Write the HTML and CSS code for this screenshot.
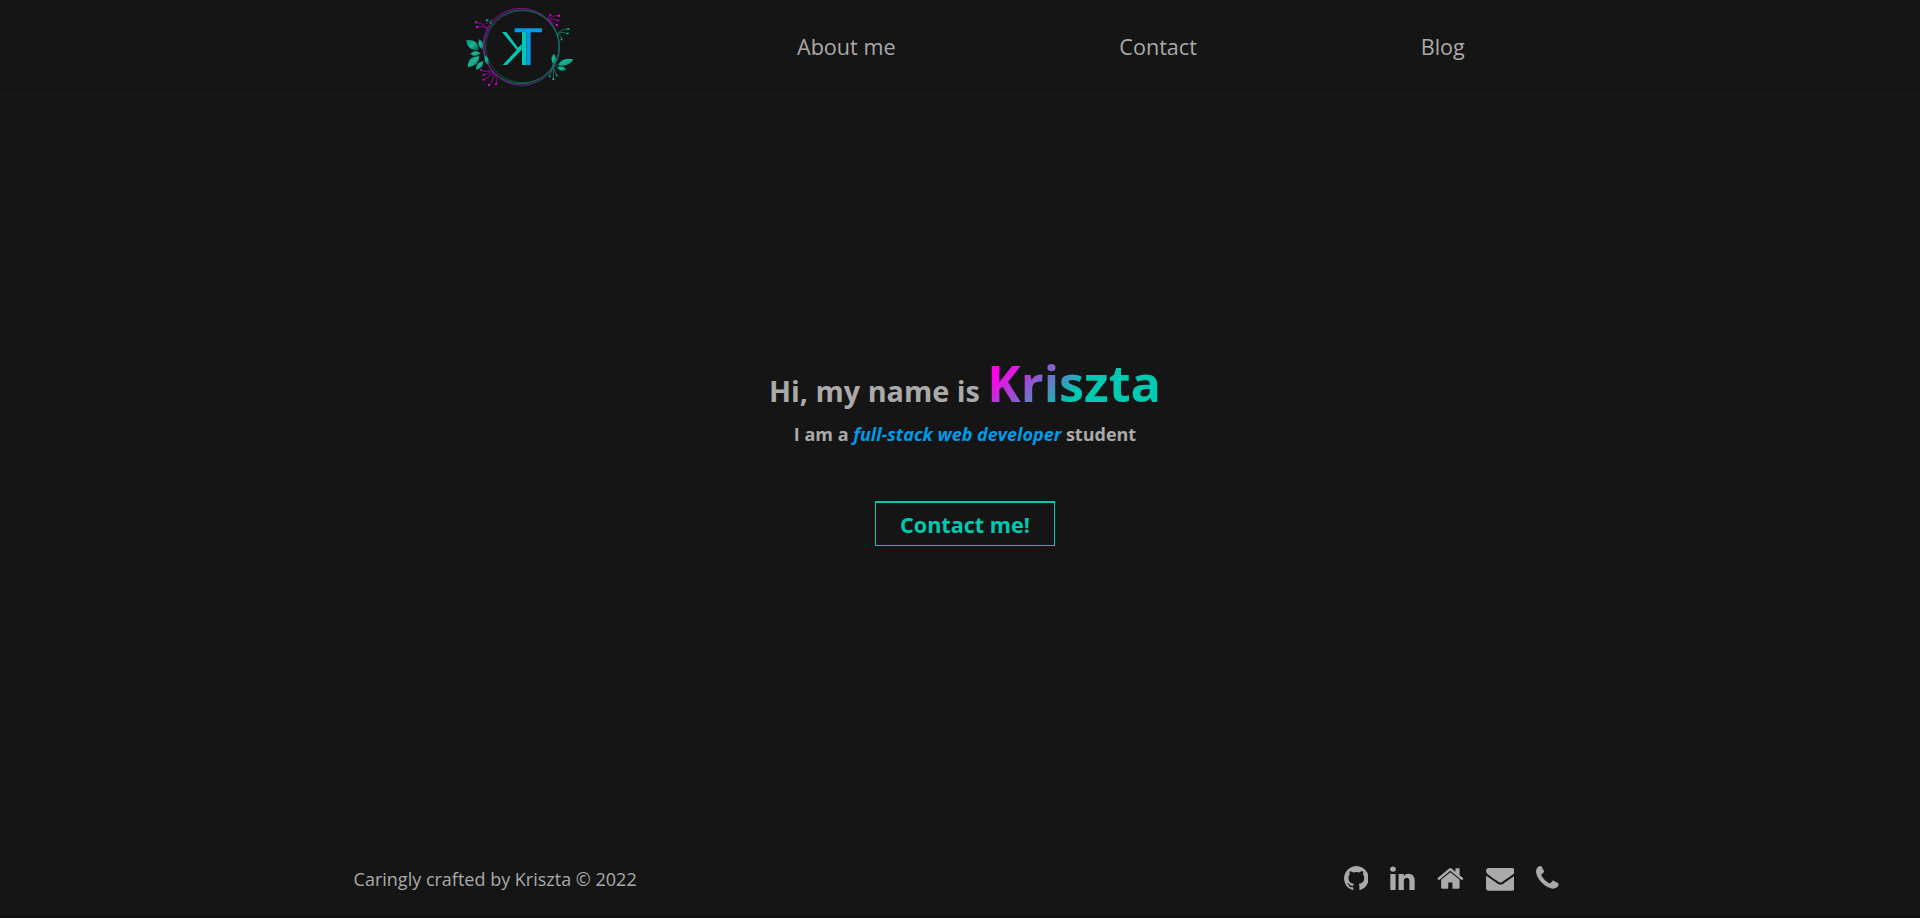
FILE: index.html
```html
<!DOCTYPE html>
<html lang="en">
<head>
<meta charset="utf-8">
<title>Kriszta</title>
<link rel="stylesheet" href="styles.css">
</head>
<body>
<header class="header">
  <nav class="nav">
    <a class="logo" href="#" aria-label="KT">
      <svg width="140" height="93" viewBox="0 0 420 279">
        <defs>
          <linearGradient id="ring" x1="0" y1="0" x2="1" y2="1"><stop offset="0" stop-color="#b100b1"/><stop offset=".45" stop-color="#7a2590"/><stop offset=".6" stop-color="#137a68"/><stop offset="1" stop-color="#128f78"/></linearGradient>
          <linearGradient id="ring2" x1="0" y1="1" x2="1" y2="0"><stop offset="0" stop-color="#b000b0"/><stop offset=".4" stop-color="#5a3a90"/><stop offset="1" stop-color="#117a66"/></linearGradient>
          <linearGradient id="leaf" x1="0" y1="0" x2="1" y2="1"><stop offset="0" stop-color="#0a8f76"/><stop offset=".5" stop-color="#1cb394"/><stop offset="1" stop-color="#075c4c"/></linearGradient>
        </defs>
        <g fill="none" stroke-width="2.6">
          <ellipse cx="213" cy="138" rx="114" ry="113" stroke="url(#ring)"/>
          <ellipse cx="215" cy="143" rx="113" ry="113" stroke="url(#ring2)"/>
          <ellipse cx="218" cy="140" rx="111" ry="108" stroke="#126b5c" stroke-width="2"/>
        </g>
        <g fill="none" stroke="#a800a8" stroke-width="2.5">
          <path d="M113 92Q107 70 78 67M111 84Q97 76 81 81M111 72L110 58"/>
          <path d="M296 65Q302 45 327 47M296 65Q307 54 324 62M296 65Q314 68 321 76M297 60Q293 51 301 44"/>
          <path d="M126 217Q122 230 101 239M128 218Q134 243 117 255M132 221Q145 236 138 251M124 214Q112 222 100 224M122 212Q103 219 94 209"/>
        </g>
        <g fill="#f000e0"><path d="M75 64h6v6h-6zM78 78h6v6h-6zM324 44h6v6h-6zM322 59h5v5h-5zM318 73h6v5h-6zM299 42h5v5h-5zM98 237h5v5h-5zM114 252h6v6h-6zM135 249h6v5h-6zM98 223h5v4h-5zM91 207h5v5h-5z"/></g>
        <g fill="none" stroke="#12806c" stroke-width="2.5"><path d="M320 105Q333 86 355 87M324 100Q338 93 353 101M321 104Q336 105 334 118M111 61Q122 65 128 74M126 58L119 72M306 203Q304 219 298 229M309 203Q312 221 310 237M310 202L320 226M307 202Q310 188 310 179M309 202Q322 193 335 186"/></g>
        <g fill="#12b796"><path d="M352 84h6v5h-6zM350 98h6v5h-6zM332 116h5v5h-5zM108 58h5v5h-5zM296 227h5v5h-5zM307 235h6v5h-6zM318 224h5v5h-5z"/></g>
        <g fill="url(#leaf)">
          <path d="M48 121Q84 114 86 150Q54 154 48 121z"/><path d="M87 118Q106 128 98 148Q79 140 87 118z"/>
          <path d="M61 162Q73 145 92 160Q78 175 61 162z"/><path d="M54 202Q52 168 88 169Q88 197 54 202z"/>
          <path d="M78 209Q78 185 100 184Q100 207 78 209z"/><path d="M104 165Q120 174 115 194Q100 188 104 165z"/>
          <path d="M311 161Q325 176 312 192Q297 179 311 161z"/><path d="M325 196Q334 170 370 178Q359 202 325 196z"/><path d="M320 202Q337 193 349 208Q334 220 320 202z"/>
        </g>
        <path d="M156 96h13L204 143L215 132V149L171 195H158L200 150z" fill="#00c9b1"/>
        <path d="M216 96h13v99h-13z" fill="#00c9b1"/><path d="M194 85h82v12h-82zM229 97h13v98h-13z" fill="#009be8"/><path d="M228 97h3v98h-3z" fill="#087da9"/>
      </svg>
    </a>
    <a class="link" href="#">About me</a>
    <a class="link" href="#">Contact</a>
    <a class="link" href="#">Blog</a>
  </nav>
</header>
<main class="hero">
  <h1 class="title">Hi, my name is <span class="name">Kriszta</span></h1>
  <h2 class="subtitle">I am a <em class="role">full-stack web developer</em> student</h2>
  <a class="button" href="#">Contact me!</a>
</main>
<footer class="footer">
  <p class="credit">Caringly crafted by Kriszta © 2022</p>
  <div class="social">
    <svg width="24.7" height="28.8" viewBox="128 0 1536 1792"><path d="M896 128q209 0 385.500 103t279.500 279.500 103 385.500q0 251-146.500 451.500t-378.500 277.500q-27 5-40-7t-13-30q0-3 .5-76.500t.5-134.500q0-97-52-142 57-6 102.500-18t94-39 81-66.500 53-105 20.500-150.500q0-119-79-206 37-91-8-204-28-9-81 11t-92 44l-38 24q-93-26-192-26t-192 26q-16-11-42.500-27t-83.500-38.500-85-13.500q-45 113-8 204-79 87-79 206 0 85 20.500 150t52.500 105 80.500 67 94 39 102.500 18q-39 36-49 103-21 10-45 15t-57 5-65.500-21.500-55.500-62.500q-19-32-48.500-52t-49.500-24l-20-3q-21 0-29 4.500t-5 11.500 9 14 13 12l7 5q22 10 43.500 38t31.500 51l10 23q13 38 44 61.500t67 30 69.500 7 55.500-3.500l23-4q0 38 .5 88.500t.5 54.500q0 18-13 30t-40 7q-232-77-378.500-277.500t-146.500-451.500q0-209 103-385.500t279.500-279.500 385.500-103z"/></svg>
    <svg width="24.7" height="28.8" viewBox="128 0 1536 1792"><path d="M477 625v991h-330v-991h330zm21-306q1 73-50.500 122t-135.500 49h-2q-82 0-132-49t-50-122q0-74 51.500-122.500t134.500-48.500 133 48.500 51 122.500zm1166 729v568h-329v-530q0-105-40.500-164.500t-126.500-59.500q-63 0-105.500 34.500t-63.500 85.500q-11 30-11 81v553h-329q2-399 2-647t-1-296l-1-48h329v144h-2q20-32 41-56t56.500-52 87-43.500 114.500-15.500q171 0 275 113.500t104 332.500z"/></svg>
    <svg width="26.7" height="28.8" viewBox="64 0 1664 1792"><path d="M1472 992v480q0 26-19 45t-45 19h-384v-384h-256v384h-384q-26 0-45-19t-19-45v-480q0-1 .5-3t.5-3l575-474 575 474q1 2 1 6zm223-69l-62 74q-8 9-21 11h-3q-13 0-21-7l-692-577-692 577q-12 8-24 7-13-2-21-11l-62-74q-8-10-7-23.500t11-21.500l719-599q32-26 76-26t76 26l244 204v-195q0-14 9-23t23-9h192q14 0 23 9t9 23v408l219 182q10 8 11 21.500t-7 23.500z"/></svg>
    <svg width="28.8" height="28.8" viewBox="0 0 1792 1792"><path d="M1792 710v794q0 66-47 113t-113 47h-1472q-66 0-113-47t-47-113v-794q44 49 101 87 362 246 497 345 57 42 92.500 65.500t94.500 48 110 24.500h2q51 0 110-24.500t94.500-48 92.500-65.500q170-123 498-345 57-39 100-87zm0-294q0 79-49 151t-122 123q-376 261-468 325-10 7-42.500 31t-54 38.500-52 32.500-57.500 27-50 9h-2q-23 0-50-9t-57.500-27-52-32.500-54-38.500-42.500-31q-91-64-262-182.500t-205-142.500q-62-42-117-115.500t-55-136.500q0-78 41.500-130t118.500-52h1472q65 0 112.500 47t47.500 113z"/></svg>
    <svg width="22.6" height="28.8" viewBox="192 0 1408 1792"><path d="M1600 1240q0 27-10 70.500t-21 68.500q-21 50-122 106-94 51-186 51-27 0-53-3.500t-57.500-12.500-47-14.500-55.500-20.500-49-18q-98-35-175-83-127-79-264-216t-216-264q-48-77-83-175-3-9-18-49t-20.500-55.500-14.500-47-12.500-57.500-3.500-53q0-92 51-186 56-101 106-122 25-11 68.500-21t70.500-10q14 0 21 3 18 6 53 76 11 19 30 54t35 63.500 31 53.500q3 4 17.500 25t21.500 35.500 7 28.500q0 20-28.500 50t-62 55-62 53-28.500 46q0 9 5 22.500t8.500 20.500 14 24 11.500 19q76 137 174 235t235 174q2 1 19 11.500t24 14 20.500 8.500 22.500 5q18 0 46-28.500t53-62 55-62 50-28.500q14 0 28.500 7t35.500 21.500 25 17.500q25 15 53.500 31t63.500 35 54 30q70 35 76 53 3 7 3 21z"/></svg>
  </div>
</footer>
</body>
</html>
```
FILE: styles.css
```css
* { box-sizing: border-box; margin: 0; padding: 0; }
html { font-size: 18px; }
body {
  height: 918px;
  display: flex;
  flex-direction: column;
  overflow: hidden;
  background: #151515;
  color: #aaa;
  font-family: "Open Sans", sans-serif;
}
a { color: inherit; text-decoration: none; }
.header { height: 95px; border-bottom: 2px solid #181818; }
.nav { display: flex; height: 93px; padding-left: 450px; }
.logo { width: 140px; height: 93px; margin-right: 207px; }
.logo svg { display: block; }
.link { font-size: 1.2rem; line-height: 93px; margin-right: 223.8px; white-space: nowrap; }
.hero { flex: 1; display: flex; flex-direction: column; align-items: center; padding: 260px 0 0 10px; }
.title { font-size: 1.6rem; line-height: 56px; font-weight: 700; }
.name {
  font-size: 2.8rem;
  background: linear-gradient(135deg, #ff00ea 15%, #00c9b1 55%);
  -webkit-background-clip: text;
  background-clip: text;
  color: transparent;
}
.subtitle { font-size: 1rem; line-height: 30px; font-weight: 700; }
.role { color: #009be8; }
.button {
  width: 180px;
  height: 45px;
  margin-top: 52px;
  border: 1px solid #00c9b1;
  border-top-width: 2px;
  color: #00c9b1;
  font-size: 1.2rem;
  font-weight: 700;
  line-height: 44px;
  text-align: center;
}
.footer {
  height: 84px;
  padding: 0 361px 0 353.6px;
  display: flex;
  justify-content: space-between;
  border-top: 1px solid #181818;
  border-bottom: 2px solid #101010;
}
.credit { font-size: 1rem; line-height: 89px; }
.social { display: flex; gap: 22px; padding-top: 29px; fill: #aaa; }
```
